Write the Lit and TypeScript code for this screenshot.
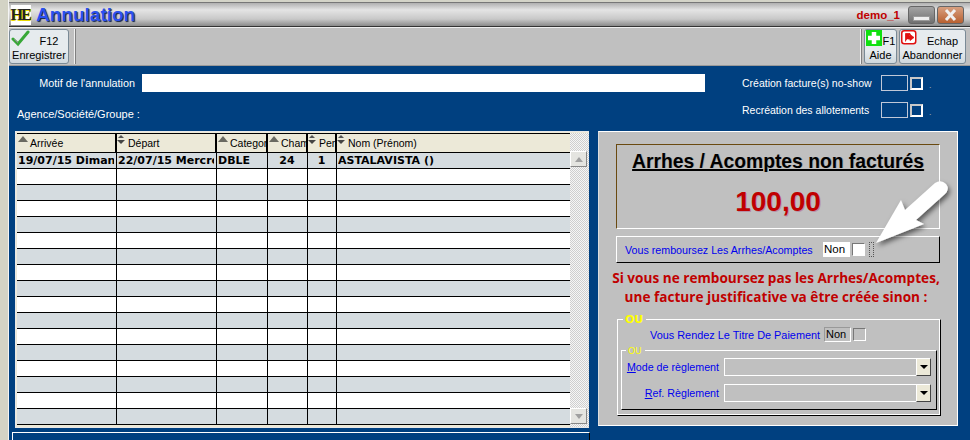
import { LitElement, html, css, svg } from "lit";
import { customElement } from "lit/decorators.js";

const sortUp = svg`<svg class="sort" width="13" height="8" viewBox="0 0 13 8"><path d="M1 7 L6 1 L11 7 Z" fill="#6a6a62"/></svg>`;
const sortBoth = svg`<svg class="sort" width="9" height="11" viewBox="0 0 9 11"><path d="M4 0 L7 3 L1 3 Z" fill="#555"/><path d="M0 5 H8 L4 9 Z" fill="#444"/></svg>`;

const columns = [
  { label: "Arrivée", w: 100, both: false },
  { label: "Départ", w: 100, both: true },
  { label: "Categor", w: 51, both: false },
  { label: "Cham", w: 40, both: false },
  { label: "Pers", w: 29, both: true },
  { label: "Nom (Prénom)", w: 233, both: true },
];
const firstRow = [
  { t: "19/07/15 Dimanche", c: "" },
  { t: "22/07/15 Mercredi", c: "" },
  { t: "DBLE", c: "" },
  { t: "24", c: "mid" },
  { t: "1", c: "mid" },
  { t: "ASTALAVISTA ()", c: "" },
];

@customElement("app-root")
export class AppRoot extends LitElement {
  static styles = css`
    :host { display: block; width: 970px; height: 440px; overflow: hidden; position: relative; font-family: "Liberation Sans", Arial, sans-serif; font-size: 10.6px; color: #000; background: #d4d4c8; }
    * { box-sizing: border-box; }
    .frame { display: flex; height: 440px; }
    .edge { width: 9px; flex: none; background: #d3d3c5; border-right: 1px solid #f4f4f4; }
    .win { flex: 1; min-width: 0; display: flex; flex-direction: column; }
    .title { height: 25px; margin-top: 2px; display: flex; align-items: center; padding: 0 6px 0 2px; background: linear-gradient(#b0b0b0 0, #e4e4e4 30%, #c8c8c8 70%, #8a8a8a 100%); border-top: 1px solid #777; border-bottom: 1px solid #333; }
    .logo { width: 20px; height: 20px; background: #fff; display: flex; align-items: center; justify-content: center; font: bold 16px "Liberation Serif", serif; color: #222; text-shadow: 1px 0 0 #e8d800, 0 1px 0 #e8d800; letter-spacing: -2px; padding-right: 2px; }
    .title h1 { margin: 0 0 0 5px; font-size: 19px; font-weight: bold; color: #2a50f0; text-shadow: 1px 1px 1px #10204a; }
    .user { margin-left: auto; margin-right: 4px; color: #c00000; font-weight: bold; font-size: 11.5px; }
    .wbtn { width: 27px; height: 18px; margin-left: 4px; border: 1px solid #666; border-radius: 3px; display: flex; align-items: center; justify-content: center; background: linear-gradient(#a4a4a4, #707070); }
    .wbtn.close { margin-left: 2px; background: linear-gradient(#d8a080, #b86030); }
    .wbtn .bar { width: 17px; height: 5px; margin-top: 8px; background: #eee; border: 1px solid #999; }
    .toolbar { height: 39px; background: #c0c0c0; border-top: 1px solid #efefef; border-bottom: 1px solid #999; display: flex; align-items: center; padding: 0 4px 0 0; }
    .tb { height: 35px; border: 1px solid #7a8a96; border-radius: 3px; background: linear-gradient(#e6ebee 0, #e6ebee 62%, #cfd8dd 100%); position: relative; font-size: 11px; text-align: center; display: flex; flex-direction: column; justify-content: flex-end; line-height: 14px; padding-bottom: 1px; white-space: nowrap; }
    .tb.f12 { width: 60px; }
    .tb.aide { width: 33px; }
    .tb.ab { width: 67px; margin-left: 2px; }
    .tb .k { padding-left: 20px; line-height: 14px; font-size: 11px; }
    .tb.aide .k { padding-left: 17px; }
    .tb svg { position: absolute; left: 1px; top: 0; }
    .sep { height: 35px; background: #f0f0f0; border-right: 1px solid #808080; width: 2px; margin: 0 5px; }
    .sep.r { margin: 0 2px 0 0; }
    .spacer { flex: 1; }
    .body { flex: 1; min-height: 0; background: #004080; color: #fff; display: flex; flex-direction: column; padding-left: 6px; }
    .top { height: 65px; display: grid; grid-template-columns: 1fr 228px; flex: none; }
    .tl { padding-top: 8px; }
    .motif { display: flex; align-items: center; height: 18px; }
    .motif label { width: 120px; text-align: right; white-space: nowrap; font-size: 10.8px; }
    .motif .in { width: 563px; height: 18px; margin-left: 7px; background: #fff; }
    .ags { margin: 16px 0 0 2px; font-size: 11px; }
    .tr { padding-top: 9px; display: flex; flex-direction: column; gap: 11px; }
    .opt { display: flex; align-items: center; height: 16px; }
    .opt label { width: 139px; white-space: nowrap; font-size: 10.5px; }
    .opt .b { width: 27px; height: 16px; border: 1px solid #c0c8d8; }
    .opt .c { width: 13px; height: 13px; margin-left: 2px; border: 2px solid #c8c8c8; border-right-color: #fff; border-bottom-color: #fff; background: #004080; }
    .opt .d { margin-left: 6px; font-size: 9px; margin-top: 3px; color: #9ab; }
    .main { flex: 1; display: flex; align-items: flex-start; min-height: 0; }
    .gridwrap { width: 574px; height: 297px; border: 1px solid #e8e8e8; display: flex; background: #ece9d8; padding: 1px 0 0 1px; flex: none; color: #000; }
    .grid { width: 553px; flex: none; border-top: 1px solid #000; }
    .row { display: flex; height: 16px; border-bottom: 1px solid #000; background: #fff; }
    .row.alt { background: #d5dce0; }
    .row.head { height: 19px; background: #ece9d8; border-bottom: 1px solid #000; }
    .cell { flex: none; overflow: hidden; white-space: nowrap; border-right: 2px solid #000; padding-left: 1px; font-weight: bold; font-size: 11px; font-family: "DejaVu Sans", Verdana, sans-serif; line-height: 15px; }
    .row:not(.head) .cell { border-right-width: 1.5px; }
    .cell:last-child { border-right: 0; }
    .cell.mid { text-align: center; }
    .cell.h { font-family: "Liberation Sans", Arial, sans-serif; font-weight: normal; font-size: 10.5px; line-height: 18px; padding-left: 0; display: flex; align-items: center; }
    .cell.h .sort { flex: none; align-self: flex-start; margin-top: 1px; }
    .cell.h.both span { margin-left: 2px; }
    .clip { display: block; overflow: hidden; margin-right: 2px; }
    .sb { width: 19px; flex: none; display: flex; flex-direction: column; justify-content: space-between; background-color: #f4f4f0; background-image: repeating-conic-gradient(#cfcfcf 0 25%, #f6f6f6 0 50%); background-size: 2px 2px; padding: 18px 2px 0 0; }
    .sbtn { height: 16px; background: #e4e4e0; border: 1px solid; border-color: #fff #888 #888 #fff; display: flex; align-items: center; justify-content: center; }
    .sbtn.dn { margin-bottom: 3px; }
    .tri { width: 0; height: 0; border-left: 4px solid transparent; border-right: 4px solid transparent; }
    .tri.up { border-bottom: 5px solid #a0a0a0; }
    .tri.dn { border-top: 5px solid #a0a0a0; }
    .panel { width: 360px; height: 295px; margin: 0 0 0 9px; background: #c0c0c0; border: 1px solid #fff; border-left-color: #ddd; color: #000; padding: 12px 17px 0 17px; display: flex; flex-direction: column; flex: none; }
    .amount { height: 85px; border: 1px solid; border-color: #6a4a10 #fff #fff #6a4a10; text-align: center; }
    .amount h2 { margin: 6px 0 0; display: inline-block; font-size: 19.3px; line-height: 22px; text-decoration: underline; text-decoration-thickness: 2px; font-weight: bold; color: #000; text-shadow: 1px 0 0 rgba(0,0,0,.15); white-space: nowrap; }
    .amount .v { font-size: 28px; font-weight: bold; color: #c00000; margin-top: 13px; line-height: 32px; text-shadow: 1px 1px 0 rgba(160,60,120,.35); }
    .refund { height: 27px; margin-top: 7px; border: 1px solid; border-color: #fff #000 #000 #fff; display: flex; align-items: center; padding-left: 8px; color: #0000ee; }
    .refund label { width: 198px; white-space: nowrap; font-size: 10.7px; }
    .non { width: 27px; height: 15px; background: #fff; color: #000; font-size: 11.5px; line-height: 15px; padding-left: 1px; white-space: nowrap; }
    .chk { width: 13px; height: 13px; margin-left: 2px; background: #fff; border: 1px solid; border-color: #777 #fff #fff #777; }
    .dots { width: 5px; height: 15px; margin-left: 4px; border: 1px dotted #555; }
    .warn { margin: 5px -2px 0 -6px; color: #c00000; font-family: "Open Sans", sans-serif; font-weight: bold; font-size: 13.6px; text-align: center; line-height: 19px; white-space: nowrap; }
    .grp { position: relative; height: 97px; margin: 13px -1px 0 1px; border: 1px solid; border-color: #fff #000 #000 #fff; box-shadow: inset -1px -1px 0 #fff; padding: 1px 3px 0 3px; color: #0000ee; }
    .leg { position: absolute; background: #c0c0c0; color: #ff0; font-weight: bold; left: 5px; top: -6px; font-size: 11px; line-height: 12px; padding: 0 3px 0 2px; font-family: "DejaVu Sans", sans-serif; }
    .leg.s { font-weight: normal; font-size: 9px; left: 4px; top: -5px; line-height: 10px; }
    .titre { display: flex; align-items: center; height: 25px; margin: 1px 0 0 29px; }
    .titre label { width: 174px; font-size: 10.9px; white-space: nowrap; }
    .titre .non { background: #c0c0c0; border: 1px solid; border-color: #999 #fff #fff #999; line-height: 13px; padding-left: 1px; font-size: 11px; }
    .titre .chk { background: #c0c0c0; }
    .sub { position: relative; margin-top: 3px; height: 60px; border: 1px solid; border-color: #fff #000 #000 #fff; padding: 7px 4px 0 0; }
    .line { display: flex; align-items: center; height: 18px; margin-bottom: 8px; }
    .line label { width: 97px; text-align: right; font-size: 10.7px; white-space: nowrap; }
    .line label u { text-underline-offset: 1px; }
    .combo { margin-left: 5px; width: 192px; height: 18px; border: 1px solid #fff; border-right: 0; }
    .dd { width: 15px; height: 18px; background: #ece9d8; border: 1px solid; border-color: #fff #444 #444 #fff; display: flex; align-items: center; justify-content: center; }
    .dd i { width: 0; height: 0; border-left: 4px solid transparent; border-right: 4px solid transparent; border-top: 4px solid #000; }
    .bottom { flex: none; height: 8px; margin: 5px 0 0 -3px; width: 578px; border: 1px solid; border-color: #fff #000 transparent #fff; border-bottom: 0; }
    .arrow { position: absolute; left: 868px; top: 175px; pointer-events: none; }
  `;

  private cols(i: number) { return `width:${columns[i].w}px`; }

  render() {
    const rows = Array.from({ length: 16 }, (_, i) => i + 1);
    return html`
      <div class="frame">
        <div class="edge"></div>
        <div class="win">
          <div class="title">
            <div class="logo">HE</div>
            <h1>Annulation</h1>
            <div class="user">demo_1</div>
            <div class="wbtn"><div class="bar"></div></div>
            <div class="wbtn close">
              <svg width="17" height="12" viewBox="0 0 17 12"><path d="M4 1 L13 11 M13 1 L4 11" stroke="#f0f0f0" stroke-width="3"/></svg>
            </div>
          </div>
          <div class="toolbar">
            <div class="tb f12">
              <svg width="19" height="17" viewBox="0 0 19 17"><path d="M2 9 L7 14 L17 2" fill="none" stroke="#38a838" stroke-width="3" stroke-linecap="round"/><path d="M3 9 L7 13" stroke="#888" stroke-width="1"/></svg>
              <div class="k">F12</div><div>Enregistrer</div>
            </div>
            <div class="sep"></div>
            <div class="spacer"></div>
            <div class="sep r"></div>
            <div class="tb aide">
              <svg width="16" height="16" viewBox="0 0 16 16"><rect width="16" height="16" fill="#10e010"/><path d="M8 2 V14 M2 8 H14" stroke="#fff" stroke-width="4.5"/></svg>
              <div class="k">F1</div><div>Aide</div>
            </div>
            <div class="tb ab">
              <svg width="16" height="15" viewBox="0 0 16 15"><rect x=".75" y=".75" width="14" height="13" rx="2.5" fill="#fff" stroke="#e01010" stroke-width="1.5"/><path d="M4.5 11.5 V3.5 H9 V5 M9 4.5 L13 7.5 L9 10.5 V9 H6.5 V6 H9 Z" fill="#e01010" stroke="#e01010" stroke-width=".8"/></svg>
              <div class="k">Echap</div><div>Abandonner</div>
            </div>
          </div>
          <div class="body">
            <div class="top">
              <div class="tl">
                <div class="motif"><label>Motif de l'annulation</label><div class="in"></div></div>
                <div class="ags">Agence/Société/Groupe :</div>
              </div>
              <div class="tr">
                <div class="opt"><label>Création facture(s) no-show</label><div class="b"></div><div class="c"></div><div class="d">.</div></div>
                <div class="opt"><label>Recréation des allotements</label><div class="b"></div><div class="c"></div><div class="d">.</div></div>
              </div>
            </div>
            <div class="main">
              <div class="gridwrap">
                <div class="grid">
                  <div class="row head">
                    ${columns.map((c, i) => html`<div class="cell h ${c.both ? "both" : ""}" style=${this.cols(i)}>${c.both ? sortBoth : sortUp}<span>${c.label}</span></div>`)}
                  </div>
                  <div class="row alt">
                    ${firstRow.map((c, i) => html`<div class="cell ${c.c}" style=${this.cols(i)}><span class="clip">${c.t}</span></div>`)}
                  </div>
                  ${rows.map((r) => html`<div class="row ${r % 2 === 0 ? "alt" : ""}">
                    ${columns.map((_, i) => html`<div class="cell" style=${this.cols(i)}></div>`)}
                  </div>`)}
                </div>
                <div class="sb">
                  <div class="sbtn"><div class="tri up"></div></div>
                  <div class="sbtn dn"><div class="tri dn"></div></div>
                </div>
              </div>
              <div class="panel">
                <div class="amount">
                  <h2>Arrhes / Acomptes non facturés</h2>
                  <div class="v">100,00</div>
                </div>
                <div class="refund">
                  <label>Vous remboursez Les Arrhes/Acomptes</label>
                  <div class="non">Non</div><div class="chk"></div><div class="dots"></div>
                </div>
                <div class="warn">Si vous ne remboursez pas les Arrhes/Acomptes,<br />une facture justificative va être créée sinon :</div>
                <div class="grp">
                  <div class="leg">OU</div>
                  <div class="titre"><label>Vous Rendez Le Titre De Paiement</label><div class="non">Non</div><div class="chk"></div></div>
                  <div class="sub">
                    <div class="leg s">OU</div>
                    <div class="line"><label><u>M</u>ode de règlement</label><div class="combo"></div><div class="dd"><i></i></div></div>
                    <div class="line"><label><u>R</u>ef. Règlement</label><div class="combo"></div><div class="dd"><i></i></div></div>
                  </div>
                </div>
              </div>
            </div>
            <div class="bottom"></div>
          </div>
        </div>
      </div>
      <svg class="arrow" width="90" height="80" viewBox="868 175 90 80">
        <defs><filter id="sh" x="-30%" y="-30%" width="170%" height="170%"><feDropShadow dx="2" dy="3" stdDeviation="2.5" flood-color="#000" flood-opacity=".55"/></filter></defs>
        <path filter="url(#sh)" d="M876 243 L901 200 L905 210 L935 183 Q941 179 946 184 Q950 189 945 194 L916 220 L924 224 Z" fill="#fff"/>
      </svg>
    `;
  }
}
